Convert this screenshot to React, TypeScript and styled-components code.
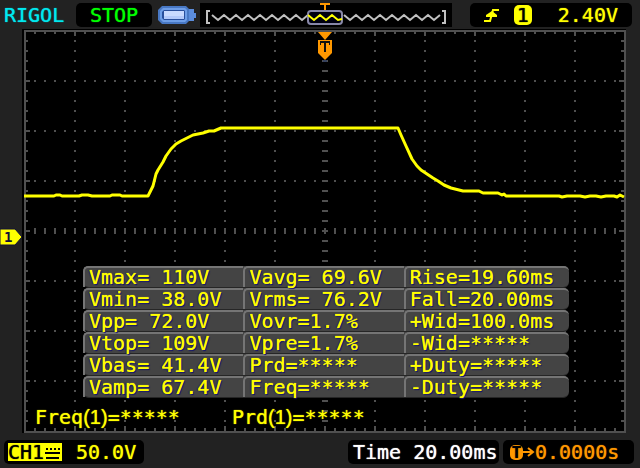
import React from "react";
import styled, { createGlobalStyle } from "styled-components";

const YELLOW = "#ffff00";
const ORANGE = "#ff9800";

const GlobalStyle = createGlobalStyle`
  * { box-sizing: border-box; }
  body {
    margin: 0;
    background: #222222;
    font-family: "DejaVu Sans Mono", monospace;
    font-size: 20px;
    line-height: 22px;
  }
  svg { display: block; flex: none; }
`;

const Scope = styled.main`
  display: flex;
  flex-direction: column;
  min-height: 100vh;
`;

const TopBar = styled.header`
  display: flex;
  align-items: center;
  height: 27px;
  padding: 2px 8px 0 4px;
`;

const Brand = styled.h1`
  margin: 0;
  width: 72px;
  font-size: 20px;
  font-weight: 400;
  color: #00e8ee;
  text-shadow: 0 0 1px currentColor;
`;

const Readout = styled.div<{ $color: string }>`
  display: flex;
  align-items: center;
  height: 24px;
  border-radius: 5px;
  background: #000;
  color: ${(p) => p.$color};
  text-shadow: 0 0 1px currentColor;
  white-space: pre;
`;

const RunState = styled(Readout)`
  padding: 0 14px;
  width: 76px;
  margin-right: 6px;
`;

const MemoryBox = styled(Readout)`
  border-radius: 0;
  margin: 0 auto 0 4px;
`;

const TriggerBox = styled(Readout)`
  width: 162px;
  padding: 0 14px;
  justify-content: space-between;
`;

const SourceBadge = styled.span`
  width: 18px;
  height: 20px;
  margin-right: 12px;
  border-radius: 5px;
  background: ${YELLOW};
  color: #000;
  line-height: 20px;
  text-align: center;
`;

const Display = styled.section`
  display: grid;
`;

const Plot = styled.svg`
  grid-area: 1 / 1;
  width: 100%;
  height: auto;
`;

const Overlay = styled.div`
  grid-area: 1 / 1;
  align-self: end;
  padding: 0 71px 7px 83px;
`;

const Measurements = styled.table`
  width: 100%;
  table-layout: fixed;
  border-collapse: separate;
  border-spacing: 0;
  color: ${YELLOW};
  text-shadow: 0 0 1px ${YELLOW}, 1px 1px 1px #000078, -1px 0 1px #000078;
`;

const Measure = styled.td<{ $wide?: boolean }>`
  width: ${(p) => (p.$wide ? "34%" : "33%")};
  height: 22px;
  padding: 0;
  background: #444444;
  border-bottom: 1px solid #262626;
  &:first-child { border-radius: 6px 0 0 6px; }
  &:last-child { border-radius: 0 6px 6px 0; }
`;

const MeasureText = styled.div`
  height: 21px;
  padding-left: 4px;
  border-top: 2px solid #757575;
  border-left: 2px solid #757575;
  border-radius: 5px 0 0 0;
  line-height: 18px;
  white-space: pre;
  td:last-child > & { border-radius: 5px 5px 0 0; }
`;

const Counters = styled.div`
  display: flex;
  gap: 52px;
  margin: 8px 0 0 -48px;
  color: ${YELLOW};
  text-shadow: 0 0 1px currentColor;
  white-space: pre;
`;

const Channel = styled.span`
  font-family: "Liberation Sans", sans-serif;
`;

const BottomBar = styled.footer`
  display: flex;
  gap: 4px;
  padding: 5px 6px 4px 4px;
`;

const ChannelBox = styled(Readout)`
  width: 140px;
  padding-left: 4px;
  margin-right: auto;
  gap: 14px;
`;

const ChannelTag = styled.span`
  display: flex;
  align-items: center;
  height: 18px;
  width: 54px;
  background: ${YELLOW};
  color: #000;
`;

const TimeBox = styled(Readout)`
  width: 151px;
  padding-left: 5px;
`;

const DelayBox = styled(Readout)`
  width: 131px;
  padding-left: 7px;
`;

const DelayBadge = styled.span`
  width: 13px;
  height: 15px;
  border-radius: 5px;
  background: ${ORANGE};
  color: #000;
  font-size: 16px;
  font-weight: 700;
  line-height: 16px;
  text-align: center;
`;

const rows = [
  ["Vmax= 110V", "Vavg= 69.6V", "Rise=19.60ms"],
  ["Vmin= 38.0V", "Vrms= 76.2V", "Fall=20.00ms"],
  ["Vpp= 72.0V", "Vovr=1.7%", "+Wid=100.0ms"],
  ["Vtop= 109V", "Vpre=1.7%", "-Wid=*****"],
  ["Vbas= 41.4V", "Prd=*****", "+Duty=*****"],
  ["Vamp= 67.4V", "Freq=*****", "-Duty=*****"],
];

const steps = (n: number) => Array.from({ length: n }, (_, i) => i);

function Battery() {
  return (
    <svg width="38" height="20" viewBox="0 0 38 20" role="img" aria-label="USB storage">
      <path d="M4 1H28L31 4V16L28 19H4L0 15V5Z" fill="#4878c4" />
      <path d="M31 4H36V8H38V13H36V16H31Z" fill="#5b8cdb" />
      <path d="M5 3H27L29 5V15L27 17H5L2 14V6Z" fill="#6e9ee8" />
      <path d="M6 5H26L27 6V14L26 15H6L4 13V7Z" fill="#294f9c" />
      <rect x="6" y="6" width="20" height="8" fill="#c9daff" />
      <rect x="6" y="11" width="20" height="3" fill="#b3c9fa" />
    </svg>
  );
}

function zigzag(from: number, to: number, high: boolean) {
  const pts: string[] = [];
  let up = high;
  for (let x = from; x <= to; x += 6) {
    pts.push(`${x},${up ? 12 : 17}`);
    up = !up;
  }
  return pts.join(" ");
}

function MemoryBar() {
  return (
    <svg width="252" height="24" viewBox="0 0 252 24" role="img" aria-label="Memory position">
      <g fill="none" stroke="#c0c0c0">
        <path d="M10 8H7V20H10M242 8H245V20H242" strokeWidth="2" />
        <polyline points={zigzag(12, 108, true)} strokeWidth="2" />
        <polyline points={zigzag(144, 240, true)} strokeWidth="2" />
        <rect x="108" y="8" width="34" height="13" rx="3" stroke="#8888a8" strokeWidth="2" fill="#000010" />
      </g>
      <polyline points={`${zigzag(108, 138, true)} 142,16`} fill="none" stroke={YELLOW} strokeWidth="2" />
      <path d="M120 0H130V2H126V7H124V2H120Z" fill={ORANGE} />
    </svg>
  );
}

function EdgeIcon() {
  return (
    <svg width="16" height="16" viewBox="0 0 16 16" role="img" aria-label="Rising edge">
      <path d="M0 14H6L9 3H15" fill="none" stroke={YELLOW} strokeWidth="2" />
      <path d="M8 4L13 8V10H2V8Z" fill={YELLOW} />
    </svg>
  );
}

function Graticule() {
  return (
    <Plot viewBox="0 0 640 408" role="img" aria-label="Channel 1 waveform">
      <rect x="22" y="2" width="604" height="404" fill="#000" />
      <g fill="#505050">
        {steps(7).flatMap((r) =>
          steps(59).map((c) => (
            <rect
              key={`h${r}-${c}`}
              x={34 + c * 10}
              y={r === 3 ? 201 : 53 + r * 50}
              width="2"
              height={r === 3 ? 6 : 2}
            />
          ))
        )}
        {steps(11).flatMap((c) =>
          steps(39).map((r) => (
            <rect
              key={`v${c}-${r}`}
              x={c === 5 ? 322 : 74 + c * 50}
              y={13 + r * 10}
              width={c === 5 ? 6 : 2}
              height="2"
            />
          ))
        )}
        {steps(59).map((c) => {
          const len = c % 5 === 4 ? 5 : 3;
          return (
            <React.Fragment key={c}>
              <rect x={34 + c * 10} y="4" width="2" height={len} />
              <rect x={34 + c * 10} y={404 - len} width="2" height={len} />
            </React.Fragment>
          );
        })}
        {steps(39).map((r) => {
          const len = r % 5 === 4 ? 5 : 3;
          return (
            <React.Fragment key={r}>
              <rect x="25" y={13 + r * 10} width={len} height="2" />
              <rect x={624 - len} y={13 + r * 10} width={len} height="2" />
            </React.Fragment>
          );
        })}
      </g>
      <path d="M25 4H625V405H25Z" fill="none" stroke="#505050" strokeWidth="2" />

      <path
        d="M24 169H54L56 168H60L62 169H79L82 168H88L92 169H110L112 168H120L122 169H148L151 163L153 159L156 147L158 143L163 135L166 129L171 122L176 117L181 114L187 111L193 108L203 106L209 104H214L221 101H398L401 108L406 119L412 132L417 139L421 143L427 147L433 151L438 154L444 158L451 161L463 164H479L483 166H498L502 168L504 167L506 169H559L562 170L567 169H580L585 170L590 169H596L601 170L606 169H614L617 170L620 168L624 170"
        fill="none"
        stroke={YELLOW}
        strokeWidth="3"
        strokeLinejoin="round"
      />

      <path d="M0 202H15L22 210L15 218H0Z" fill={YELLOW} stroke="#101038" />
      <text x="4" y="215" fontSize="14" fontWeight="700" fill="#101038">1</text>

      <path d="M318 5H332L325 13Z" fill={ORANGE} />
      <path d="M318 13H332V26L325 33L318 26Z" fill={ORANGE} />
      <path d="M320 14H330V18H329V16H326V25H324V16H321V18H320Z" fill="#101010" />
      <rect x="323" y="33" width="4" height="2" fill="#34405c" />
    </Plot>
  );
}

function Counter({ name }: { name: string }) {
  return (
    <span>
      {name}
      <Channel>(1)</Channel>
      =*****
    </span>
  );
}

export default function App() {
  return (
    <Scope>
      <GlobalStyle />
      <TopBar>
        <Brand>RIGOL</Brand>
        <RunState $color="#00ff00">STOP</RunState>
        <Battery />
        <MemoryBox $color="#c0c0c0">
          <MemoryBar />
        </MemoryBox>
        <TriggerBox $color={YELLOW}>
          <EdgeIcon />
          <SourceBadge>1</SourceBadge>
          <span>2.40V</span>
        </TriggerBox>
      </TopBar>

      <Display>
        <Graticule />
        <Overlay>
          <Measurements aria-label="Measurements">
            <tbody>
              {rows.map((row) => (
                <tr key={row[0]}>
                  {row.map((text, i) => (
                    <Measure key={text} $wide={i === 2}>
                      <MeasureText>{text}</MeasureText>
                    </Measure>
                  ))}
                </tr>
              ))}
            </tbody>
          </Measurements>
          <Counters>
            <Counter name="Freq" />
            <Counter name="Prd" />
          </Counters>
        </Overlay>
      </Display>

      <BottomBar>
        <ChannelBox $color={YELLOW}>
          <ChannelTag>
            CH1
            <svg width="17" height="14" viewBox="0 0 17 14" role="img" aria-label="DC coupling">
              <path d="M2 3H4V5H2ZM6 3H8V5H6ZM10 3H12V5H10ZM14 3H16V5H14ZM1 7H16V9H1ZM2 12H15V14H2Z" fill="#000" />
            </svg>
          </ChannelTag>
          <span>50.0V</span>
        </ChannelBox>
        <TimeBox $color="#ffffff">Time 20.00ms</TimeBox>
        <DelayBox $color={ORANGE}>
          <DelayBadge>T</DelayBadge>
          <svg width="12" height="12" viewBox="0 0 12 12" aria-hidden="true">
            <path d="M0 6H9M5 2L10 6L5 10" fill="none" stroke={ORANGE} strokeWidth="2" />
          </svg>
          <span>0.0000s</span>
        </DelayBox>
      </BottomBar>
    </Scope>
  );
}
